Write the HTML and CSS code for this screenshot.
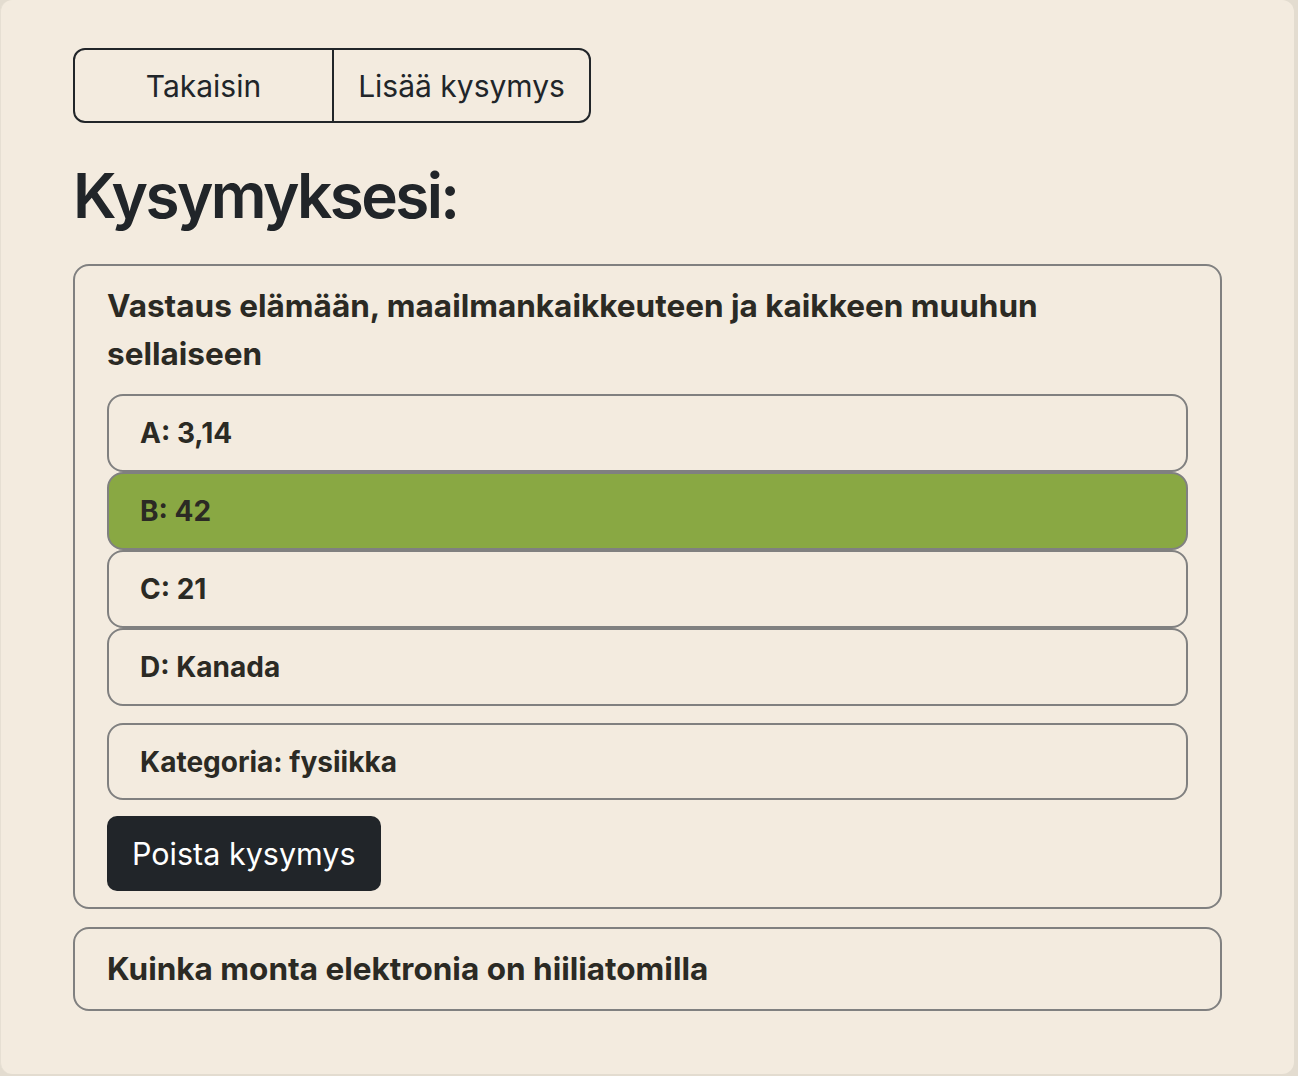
FILE: index.html
```html
<!DOCTYPE html>
<html lang="fi">
<head>
<meta charset="utf-8">
<title>Kysymyksesi</title>
<link rel="stylesheet" href="styles.css">
</head>
<body>
<div class="page">
  <div class="btn-group">
    <button class="btn-outline">Takaisin</button>
    <button class="btn-outline">Lisää kysymys</button>
  </div>
  <h1 class="heading">Kysymyksesi:</h1>
  <div class="card">
    <h2 class="q-title">Vastaus elämään, maailmankaikkeuteen ja kaikkeen muuhun sellaiseen</h2>
    <div class="options">
      <div class="option">A: 3,14</div>
      <div class="option correct">B: 42</div>
      <div class="option">C: 21</div>
      <div class="option">D: Kanada</div>
    </div>
    <div class="option category">Kategoria: fysiikka</div>
    <button class="btn-dark">Poista kysymys</button>
  </div>
  <div class="card">
    <h2 class="q-title">Kuinka monta elektronia on hiiliatomilla</h2>
  </div>
</div>
</body>
</html>
```

FILE: styles.css
```css
html, body {
  margin: 0;
  padding: 0;
  background: #e3dcd0;
}
body {
  font-family: Inter, "Noto Sans", "Liberation Sans", sans-serif;
  color: #2b2a24;
}
.page {
  box-sizing: border-box;
  width: 1294px;
  height: 1074px;
  background: #f3ebdf;
  border-radius: 12px;
  padding: 48px 72px 0 72px;
  border-left: 1px solid #e6dfd3;
}
.btn-group {
  display: inline-flex;
  border: 2px solid #212529;
  border-radius: 12px;
  overflow: hidden;
}
.btn-outline {
  width: 257px;
  height: 71px;
  background: transparent;
  border: none;
  font-family: inherit;
  font-size: 30px;
  color: #212529;
  padding: 0;
}
.btn-outline + .btn-outline {
  border-left: 2px solid #212529;
}
.heading {
  margin: 36px 0 31px 0;
  font-size: 62px;
  font-weight: 600;
  letter-spacing: -2.6px;
  line-height: 1.2;
  color: #212529;
}
.card {
  border: 2px solid #808080;
  border-radius: 16px;
  padding: 16px 32px;
  margin-bottom: 18px;
}
.q-title {
  margin: 0;
  font-size: 31.5px;
  font-weight: 700;
  line-height: 48px;
  color: #2b2a24;
}
.options {
  margin-top: 16px;
  display: flex;
  flex-direction: column;
}
.option {
  box-sizing: border-box;
  height: 78px;
  flex: none;
  display: flex;
  align-items: center;
  padding: 0 31px;
  border: 2px solid #808080;
  border-radius: 16px;
  font-size: 28px;
  font-weight: 700;
  color: #2b2a24;
}
.option.correct {
  background: #89a843;
}
.option.category {
  margin-top: 17px;
  height: 77px;
}
.btn-dark {
  margin-top: 16px;
  background: #212529;
  color: #ffffff;
  border: none;
  border-radius: 10px;
  height: 75px;
  padding: 0 25px;
  font-family: inherit;
  font-size: 30.5px;
  display: block;
}
```
